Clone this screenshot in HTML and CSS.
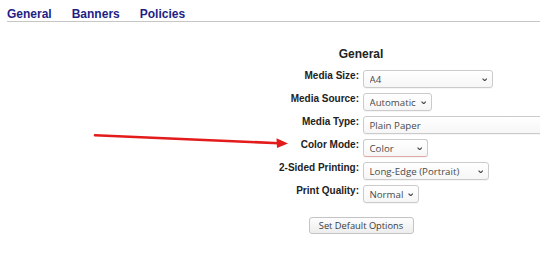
FILE: index.html
```html
<!DOCTYPE html>
<html lang="en">
<head>
  <meta charset="UTF-8">
  <title>Printer Options</title>
  <link rel="stylesheet" href="styles.css">
</head>
<body>
  <nav class="tabs">
    <a href="#general">General</a>
    <a href="#banners">Banners</a>
    <a href="#policies">Policies</a>
  </nav>

  <form class="options">
    <h2>General</h2>
    <div class="fields">
      <label for="media-size">Media Size:</label>
      <span class="picker">
        <select id="media-size" class="w-size"><option>A4</option></select>
        <svg class="chevron" viewBox="0 0 6 4"><path d="M0.6 0.6 L3 3 L5.4 0.6"/></svg>
      </span>

      <label for="media-source">Media Source:</label>
      <span class="picker">
        <select id="media-source" class="w-source"><option>Automatic</option></select>
        <svg class="chevron" viewBox="0 0 6 4"><path d="M0.6 0.6 L3 3 L5.4 0.6"/></svg>
      </span>

      <label for="media-type">Media Type:</label>
      <span class="picker">
        <select id="media-type" class="w-type"><option>Plain Paper</option></select>
      </span>

      <label for="color-mode">Color Mode:</label>
      <span class="picker">
        <select id="color-mode" class="w-color focused"><option>Color</option></select>
        <svg class="chevron" viewBox="0 0 6 4"><path d="M0.6 0.6 L3 3 L5.4 0.6"/></svg>
      </span>

      <label for="duplex">2-Sided Printing:</label>
      <span class="picker">
        <select id="duplex" class="w-duplex"><option>Long-Edge (Portrait)</option></select>
        <svg class="chevron" viewBox="0 0 6 4"><path d="M0.6 0.6 L3 3 L5.4 0.6"/></svg>
      </span>

      <label for="quality">Print Quality:</label>
      <span class="picker">
        <select id="quality" class="w-quality"><option>Normal</option></select>
        <svg class="chevron" viewBox="0 0 6 4"><path d="M0.6 0.6 L3 3 L5.4 0.6"/></svg>
      </span>
    </div>

    <div class="actions">
      <button type="button">Set Default Options</button>
    </div>
  </form>

  <!-- annotation arrow pointing at Color Mode -->
  <svg class="annotation" viewBox="0 0 540 274">
    <path d="M95 135.2 L279 143.2" stroke="#e31b1b" stroke-width="2.6" stroke-linecap="round" fill="none"/>
    <path d="M288 143.6 L276.5 138.2 L277 148 Z" fill="#e31b1b"/>
  </svg>
</body>
</html>
```

FILE: styles.css
```css
/* General styles */
body {
  margin: 0;
  font-family: 'Liberation Sans', Arial, sans-serif;
  background-color: #fff;
  color: #222;
  overflow: hidden;
}

.tabs {
  display: flex;
  gap: 20px;
  margin-left: 7px;
  padding-top: 7px;
  border-bottom: 1px solid #c6c6c6;
}

.tabs a {
  font-size: 12px;
  font-weight: bold;
  line-height: 14px;
  color: #1e1e86;
  text-decoration: none;
}

.options {
  margin: 25px 0 0 160px;
  width: 402px;
}

.options h2 {
  margin: 0 0 9px;
  font-size: 12px;
  line-height: 14px;
  text-align: center;
  color: #222;
}

.fields {
  display: grid;
  grid-template-columns: 199px 1fr;
  column-gap: 4px;
  row-gap: 5px;
}

.fields label {
  text-align: right;
  font-size: 10px;
  font-weight: bold;
  line-height: 12px;
  white-space: nowrap;
  color: #222;
}

.picker {
  position: relative;
  justify-self: start;
  display: block;
  height: 18px;
}

.picker select {
  appearance: none;
  -webkit-appearance: none;
  box-sizing: border-box;
  display: block;
  height: 18px;
  margin: 0;
  padding: 0 14px 0 5.5px;
  font-family: 'Open Sans', sans-serif;
  font-size: 9.7px;
  color: #4a4a4a;
  background: linear-gradient(#ffffff, #f6f6f6);
  border: 1px solid #cbcbcb;
  border-radius: 3px;
  box-shadow: 0 1px 0 rgba(0, 0, 0, 0.04);
}

.picker select.focused {
  border-bottom-color: #e2a9a9;
}

.chevron {
  position: absolute;
  right: 6px;
  top: 7.5px;
  width: 5.5px;
  height: 3.7px;
  fill: none;
  stroke: #4a4a4a;
  stroke-width: 1.3;
  pointer-events: none;
}

.w-size { width: 130px; }
.w-source { width: 69px; }
.w-type { width: 199px; }
.w-color { width: 65px; }
.w-duplex { width: 126px; }
.w-quality { width: 56px; }

.actions {
  display: flex;
  justify-content: center;
  margin-top: 14px;
}

.actions button {
  box-sizing: border-box;
  width: 105px;
  height: 17px;
  padding: 0;
  font-family: 'Open Sans', sans-serif;
  font-size: 9.3px;
  color: #3a3a3a;
  background: linear-gradient(#fdfdfd, #ededed);
  border: 1px solid #c4c4c4;
  border-radius: 3px;
}

.annotation {
  position: absolute;
  left: 0;
  top: 0;
  width: 540px;
  height: 274px;
  pointer-events: none;
}
```
